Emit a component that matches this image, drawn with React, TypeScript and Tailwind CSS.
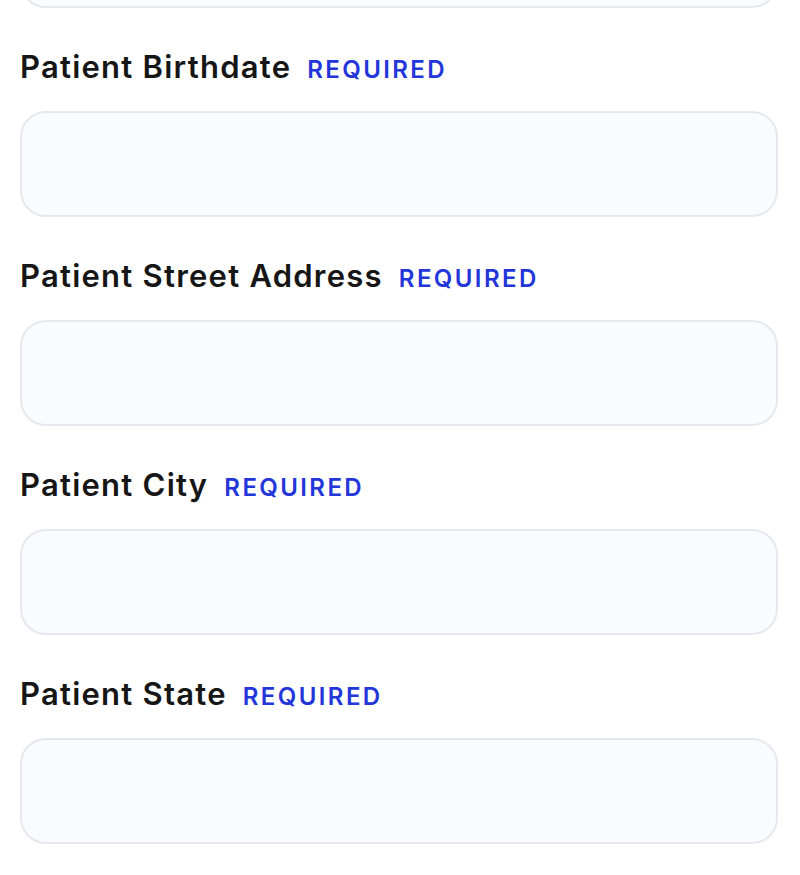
const fields = [
  "Patient Birthdate",
  "Patient Street Address",
  "Patient City",
  "Patient State",
];

function Field({ label }: { label: string }) {
  return (
    <div className="pt-[39px]">
      <div className="flex h-[40px] items-baseline gap-[16px] leading-[40px]">
        <span className="text-[31px] font-semibold tracking-[0.04em] text-[#161616]">{label}</span>
        <span className="text-[24px] font-semibold tracking-[0.1em] text-[#2236d9]">REQUIRED</span>
      </div>
      <div className="mt-[24px] h-[106px] rounded-[26px] border-2 border-[#e6e8ef] bg-[#fafbfc]" />
    </div>
  );
}

export default function App() {
  return (
    <div className="h-[875px] overflow-hidden bg-white pl-[20px] pr-[22px] font-['Inter',sans-serif]">
      <div className="-mt-[98px] h-[106px] rounded-[26px] border-2 border-[#e6e8ef] bg-[#fafbfc]" />
      {fields.map((f) => (
        <Field key={f} label={f} />
      ))}
    </div>
  );
}
